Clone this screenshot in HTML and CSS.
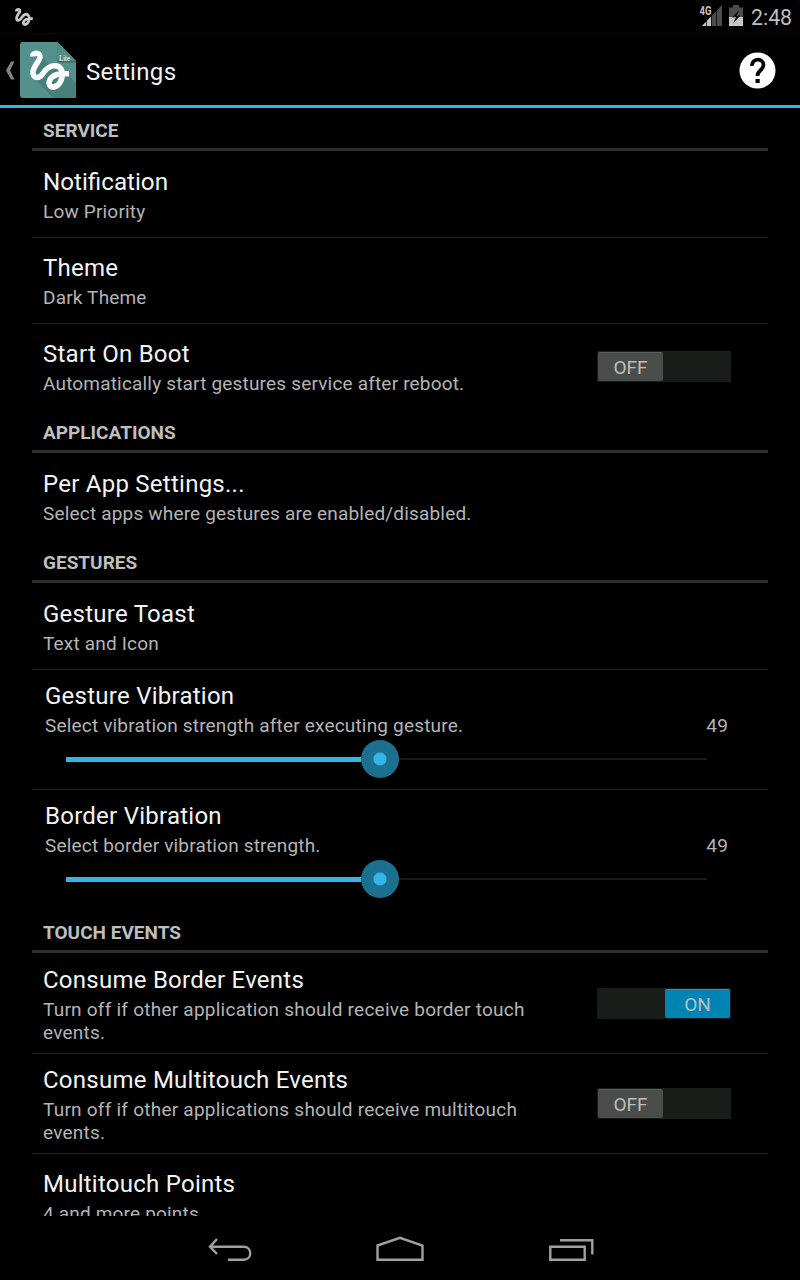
FILE: index.html
```html
<!DOCTYPE html>
<html lang="en">
<head>
<meta charset="utf-8">
<title>Settings</title>
<link rel="stylesheet" href="styles.css">
</head>
<body>
<div class="screen">
  <div class="status-bar">
    <svg class="status-logo" width="20" height="20" viewBox="14 7 20 20"><path d="M16.300 11.500C16.200 8.300 21 8.800 19.600 12C18.500 14 15.800 17 16.700 19.200C17.800 21.800 20.500 19.500 21.600 17.600C23 15 25.800 13.200 28 15C30.300 17 29.300 21.500 27.200 23.500C25 25.600 22.600 24 23.600 21.700C24.800 19 28.500 18.300 32.800 18.600" fill="none" stroke="#c9c9c9" stroke-width="2.800"/></svg>
    <div class="status-right">
      <svg width="46" height="34" viewBox="698 0 46 34">
        <path d="M702 26L722 5V26Z" fill="#4b4d4b"/>
        <path d="M702 26L711 16.500V26Z" fill="#c4c4c4"/>
        <path d="M706.500 16V26M711.500 12V26M716.500 8V26" stroke="#000" stroke-width=".7"/>
        <rect x="699" y="5" width="13" height="11" fill="#000"/>
        <text class="network" x="699.500" y="15" textLength="12" lengthAdjust="spacingAndGlyphs">4G</text>
        <path d="M733 5H739V7.500H743V26H729V7.500H733Z" fill="#4b4d4b"/>
        <rect x="729" y="17" width="14" height="9" fill="#c4c4c4"/>
        <path d="M739.500 9.500L732 17.500L736 17L733 23.500L740.500 15.500L736.500 16Z" fill="#101010"/>
      </svg>
      <span class="clock">2:48</span>
    </div>
  </div>
  <header class="action-bar">
    <svg class="up" width="10" height="22" viewBox="5 60 10 22"><path d="M14.500 61.500H11L6 70.500L11 79.500H14.500L10 70.500Z" fill="#828282"/></svg>
    <svg class="app-icon" width="56" height="56" viewBox="20 42 56 56">
      <path d="M23 42H57.500L76 61V95Q76 98 73 98H23Q20 98 20 95V45Q20 42 23 42Z" fill="#54918d"/>
      <path d="M34 78L42 57L53 68L69 76L76 83V98H53Z" fill="#467f7b"/>
      <path d="M57.500 42L76 61V62.500H59Q57.500 62.500 57.500 61Z" fill="#356d69"/>
      <path d="M57.500 42L76 61H60Q57.500 61 57.500 58.500Z" fill="#4f8d89"/>
      <text class="lite" x="59" y="60.500" textLength="11" lengthAdjust="spacingAndGlyphs">Lite</text>
      <path d="M32.500 56.500C32.500 52.500 40 51.500 40 57C40 61.500 31.800 67 33 73.500C34.200 79 39.500 78.500 42.500 74C46 68.500 51.500 64.500 57 66C63.500 68 63.500 77 60 82.500C56.500 88 50.500 88.500 49.300 84C48.300 80 52 76 57 74.500C60.500 73.500 64.500 73.800 69 73.800" fill="none" stroke="#fff" stroke-width="5.500"/>
    </svg>
    <h1 class="bar-title">Settings</h1>
    <svg class="help" width="38" height="38" viewBox="739 52 38 38"><circle cx="757.500" cy="70.500" r="18" fill="#fff"/><path d="M752 65.800C751.500 58 763.500 57.500 763.500 65C763.500 70 757.500 70.500 757.500 76" fill="none" stroke="#000" stroke-width="3.800"/><rect x="755.500" y="79" width="4.200" height="4" fill="#000"/></svg>
  </header>
  <main class="list">
    <h2 class="section">SERVICE</h2>
    <div class="row"><div class="title ligature">Notification</div><div class="summary">Low Priority</div></div>
    <div class="row next"><div class="title">Theme</div><div class="summary">Dark Theme</div></div>
    <div class="row last next with-switch">
      <div class="texts"><div class="title">Start On Boot</div><div class="summary">Automatically start gestures service after reboot.</div></div>
      <div class="switch"><span class="thumb">OFF</span></div>
    </div>
    <h2 class="section">APPLICATIONS</h2>
    <div class="row last tall"><div class="title">Per App Settings...</div><div class="summary">Select apps where gestures are enabled/disabled.</div></div>
    <h2 class="section">GESTURES</h2>
    <div class="row"><div class="title">Gesture Toast</div><div class="summary">Text and Icon</div></div>
    <div class="row slider-row">
      <div class="title">Gesture Vibration</div>
      <div class="value-line"><div class="summary">Select vibration strength after executing gesture.</div><div class="summary">49</div></div>
      <div class="slider"><div class="fill"></div><div class="knob"></div><div class="rest"></div></div>
    </div>
    <div class="row slider-row last">
      <div class="title">Border Vibration</div>
      <div class="value-line"><div class="summary">Select border vibration strength.</div><div class="summary">49</div></div>
      <div class="slider"><div class="fill"></div><div class="knob"></div><div class="rest"></div></div>
    </div>
    <h2 class="section">TOUCH EVENTS</h2>
    <div class="row with-switch two-line">
      <div class="texts"><div class="title">Consume Border Events</div><div class="summary">Turn off if other application should receive border touch<br>events.</div></div>
      <div class="switch on"><span class="thumb">ON</span></div>
    </div>
    <div class="row with-switch two-line second">
      <div class="texts"><div class="title">Consume Multitouch Events</div><div class="summary">Turn off if other applications should receive multitouch<br>events.</div></div>
      <div class="switch"><span class="thumb">OFF</span></div>
    </div>
    <div class="row last next"><div class="title">Multitouch Points</div><div class="summary">4 and more points</div></div>
  </main>
  <nav class="nav-bar">
    <svg width="46" height="26" viewBox="207 1236 46 26"><path d="M217 1239L210 1246.700L217 1254M210 1246.700H243.500C252.500 1246.700 252.500 1259.800 243.500 1259.800H228" fill="none" stroke="#a0a0a0" stroke-width="2.400"/></svg>
    <svg width="50" height="26" viewBox="375 1236 50 26"><path d="M377.500 1245.500L400 1237.800L422.500 1245.500V1259.800H377.500Z" fill="none" stroke="#a0a0a0" stroke-width="2.400"/></svg>
    <svg class="recents" width="47" height="26" viewBox="547 1236 47 26"><path d="M550.300 1246.700H584.700V1259.800H550.300ZM560 1240.200H592.300V1254.500" fill="none" stroke="#a0a0a0" stroke-width="2.400"/></svg>
  </nav>
</div>
</body>
</html>
```
FILE: styles.css
```css
* { box-sizing: border-box; }
body { margin: 0; background: #000; font-family: Roboto, sans-serif; }
.screen { width: 800px; height: 1280px; display: flex; flex-direction: column; overflow: hidden; background: #000; }
.status-bar { height: 34px; display: flex; justify-content: space-between; padding: 0 8px 0 14px; border-bottom: 1px solid #0c0c0c; }
.status-logo { margin-top: 7px; }
.status-right { display: flex; gap: 7px; }
.clock { color: #bebebe; font-size: 21.3px; line-height: 36px; width: 41px; white-space: nowrap; }
.network { font: bold 12px Roboto, sans-serif; fill: #c4c4c4; }
.lite { font: 9px "Liberation Serif", serif; fill: #fff; }
.action-bar { height: 74px; border-bottom: 3px solid #33b5e5; display: flex; align-items: flex-start; padding-left: 5px; }
.up { margin-top: 26px; }
.app-icon { margin: 8px 0 0 5px; }
.bar-title { margin: 0 0 0 10px; font-weight: 400; font-size: 24px; line-height: 76px; color: #f3f3f3; flex: 1; letter-spacing: .35px; }
.help { margin: 18px 23px 0 0; }
.list { height: 1108px; overflow: hidden; padding: 0 32px; flex: none; }
.section { margin: 0; height: 43px; border-bottom: 3px solid #2e2e2e; padding-left: 11px; font-size: 19px; line-height: 46px; font-weight: 700; color: #bebebe; }
.row { height: 87px; border-bottom: 1px solid #222; padding: 15px 0 0 11px; white-space: nowrap; }
.row.next { height: 86px; padding-top: 14px; }
.row.last { height: 86px; border-bottom: 0; }
.row.tall { height: 87px; }
.title { font-size: 24px; line-height: 32px; color: #f3f3f3; letter-spacing: .25px; }
.title.ligature { letter-spacing: 0; font-size: 24.2px; }
.summary { font-size: 19px; line-height: 23px; color: #b4b4b4; margin-top: 2px; letter-spacing: .18px; }
.with-switch { display: flex; justify-content: space-between; padding-right: 37px; }
.switch { width: 134px; height: 31px; margin-top: 13px; background: #181d19; padding: 1px; display: flex; flex: none; }
.switch.on { justify-content: flex-end; }
.thumb { width: 65px; height: 29px; background: #4b4d4b; border-top: 1px solid #5b5d5b; border-radius: 2px; text-align: center; font-size: 19px; line-height: 29px; color: #bebebe; }
.on .thumb { background: #0084b4; border-color: #2796bf; }
.row.two-line { height: 101px; padding-top: 11px; }
.row.two-line .summary { letter-spacing: .24px; }
.row.two-line.second { height: 100px; padding-top: 10px; }
.two-line .switch { margin-top: 24px; }
.row.slider-row { height: 120px; padding: 10px 40px 0 13px; }
.value-line { display: flex; justify-content: space-between; }
.slider { display: flex; align-items: center; height: 38px; margin: 3px 21px 0 21px; }
.fill { width: 294.500px; height: 5px; background: #33b5e5; }
.knob { width: 38px; height: 38px; border-radius: 50%; flex: none; background: radial-gradient(circle, #33b5e5 6px, #1b6f8f 7px); }
.rest { flex: 1; height: 2px; background: #191919; }
.nav-bar { height: 64px; display: flex; justify-content: center; gap: 122px; padding: 20px 0 0 1px; }
```
